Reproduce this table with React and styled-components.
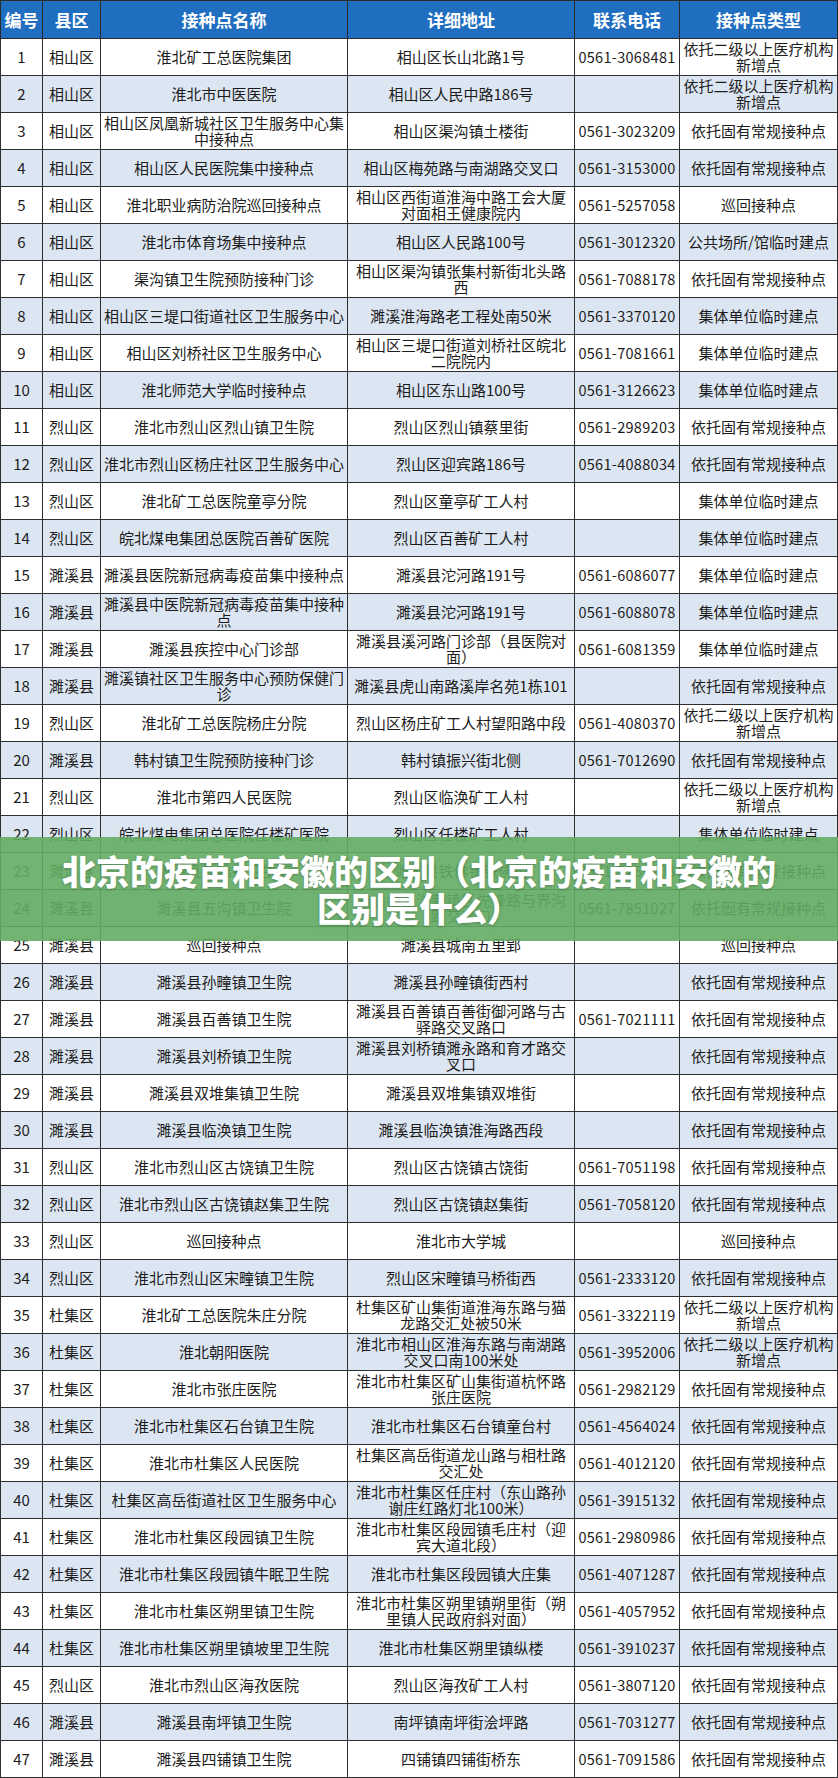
import styled, { createGlobalStyle } from "styled-components";

const GlobalStyle = createGlobalStyle`
  html, body {
    margin: 0;
    padding: 0;
    background: #ffffff;
  }
  body {
    font-family: "Noto Sans CJK SC", "Noto Sans", sans-serif;
  }
`;

const columns = [
  { title: "编号", width: 42 },
  { title: "县区", width: 58 },
  { title: "接种点名称", width: 247 },
  { title: "详细地址", width: 227 },
  { title: "联系电话", width: 105 },
  { title: "接种点类型", width: 158 },
];

const rows = [
  ["相山区", "淮北矿工总医院集团", "相山区长山北路1号", "0561-3068481", "依托二级以上医疗机构新增点"],
  ["相山区", "淮北市中医医院", "相山区人民中路186号", "", "依托二级以上医疗机构新增点"],
  ["相山区", "相山区凤凰新城社区卫生服务中心集中接种点", "相山区渠沟镇土楼街", "0561-3023209", "依托固有常规接种点"],
  ["相山区", "相山区人民医院集中接种点", "相山区梅苑路与南湖路交叉口", "0561-3153000", "依托固有常规接种点"],
  ["相山区", "淮北职业病防治院巡回接种点", "相山区西街道淮海中路工会大厦对面相王健康院内", "0561-5257058", "巡回接种点"],
  ["相山区", "淮北市体育场集中接种点", "相山区人民路100号", "0561-3012320", "公共场所/馆临时建点"],
  ["相山区", "渠沟镇卫生院预防接种门诊", "相山区渠沟镇张集村新街北头路西", "0561-7088178", "依托固有常规接种点"],
  ["相山区", "相山区三堤口街道社区卫生服务中心", "濉溪淮海路老工程处南50米", "0561-3370120", "集体单位临时建点"],
  ["相山区", "相山区刘桥社区卫生服务中心", "相山区三堤口街道刘桥社区皖北二院院内", "0561-7081661", "集体单位临时建点"],
  ["相山区", "淮北师范大学临时接种点", "相山区东山路100号", "0561-3126623", "集体单位临时建点"],
  ["烈山区", "淮北市烈山区烈山镇卫生院", "烈山区烈山镇蔡里街", "0561-2989203", "依托固有常规接种点"],
  ["烈山区", "淮北市烈山区杨庄社区卫生服务中心", "烈山区迎宾路186号", "0561-4088034", "依托固有常规接种点"],
  ["烈山区", "淮北矿工总医院童亭分院", "烈山区童亭矿工人村", "", "集体单位临时建点"],
  ["烈山区", "皖北煤电集团总医院百善矿医院", "烈山区百善矿工人村", "", "集体单位临时建点"],
  ["濉溪县", "濉溪县医院新冠病毒疫苗集中接种点", "濉溪县沱河路191号", "0561-6086077", "集体单位临时建点"],
  ["濉溪县", "濉溪县中医院新冠病毒疫苗集中接种点", "濉溪县沱河路191号", "0561-6088078", "集体单位临时建点"],
  ["濉溪县", "濉溪县疾控中心门诊部", "濉溪县溪河路门诊部（县医院对面）", "0561-6081359", "集体单位临时建点"],
  ["濉溪县", "濉溪镇社区卫生服务中心预防保健门诊", "濉溪县虎山南路溪岸名苑1栋101", "", "依托固有常规接种点"],
  ["烈山区", "淮北矿工总医院杨庄分院", "烈山区杨庄矿工人村望阳路中段", "0561-4080370", "依托二级以上医疗机构新增点"],
  ["濉溪县", "韩村镇卫生院预防接种门诊", "韩村镇振兴街北侧", "0561-7012690", "依托固有常规接种点"],
  ["烈山区", "淮北市第四人民医院", "烈山区临涣矿工人村", "", "依托二级以上医疗机构新增点"],
  ["烈山区", "皖北煤电集团总医院任楼矿医院", "烈山区任楼矿工人村", "", "集体单位临时建点"],
  ["濉溪县", "濉溪县铁佛镇卫生院", "濉溪县铁佛镇铁佛街", "0561-7251203", "依托固有常规接种点"],
  ["濉溪县", "濉溪县五沟镇卫生院", "濉溪县五沟新镇区先锋路与界沟路交叉口", "0561-7851027", "依托固有常规接种点"],
  ["濉溪县", "巡回接种点", "濉溪县城南五里郢", "", "巡回接种点"],
  ["濉溪县", "濉溪县孙疃镇卫生院", "濉溪县孙疃镇街西村", "", "依托固有常规接种点"],
  ["濉溪县", "濉溪县百善镇卫生院", "濉溪县百善镇百善街御河路与古驿路交叉路口", "0561-7021111", "依托固有常规接种点"],
  ["濉溪县", "濉溪县刘桥镇卫生院", "濉溪县刘桥镇濉永路和育才路交叉口", "", "依托固有常规接种点"],
  ["濉溪县", "濉溪县双堆集镇卫生院", "濉溪县双堆集镇双堆街", "", "依托固有常规接种点"],
  ["濉溪县", "濉溪县临涣镇卫生院", "濉溪县临涣镇淮海路西段", "", "依托固有常规接种点"],
  ["烈山区", "淮北市烈山区古饶镇卫生院", "烈山区古饶镇古饶街", "0561-7051198", "依托固有常规接种点"],
  ["烈山区", "淮北市烈山区古饶镇赵集卫生院", "烈山区古饶镇赵集街", "0561-7058120", "依托固有常规接种点"],
  ["烈山区", "巡回接种点", "淮北市大学城", "", "巡回接种点"],
  ["烈山区", "淮北市烈山区宋疃镇卫生院", "烈山区宋疃镇马桥街西", "0561-2333120", "依托固有常规接种点"],
  ["杜集区", "淮北矿工总医院朱庄分院", "杜集区矿山集街道淮海东路与猫龙路交汇处被50米", "0561-3322119", "依托二级以上医疗机构新增点"],
  ["杜集区", "淮北朝阳医院", "淮北市相山区淮海东路与南湖路交叉口南100米处", "0561-3952006", "依托二级以上医疗机构新增点"],
  ["杜集区", "淮北市张庄医院", "淮北市杜集区矿山集街道杭怀路张庄医院", "0561-2982129", "依托固有常规接种点"],
  ["杜集区", "淮北市杜集区石台镇卫生院", "淮北市杜集区石台镇童台村", "0561-4564024", "依托固有常规接种点"],
  ["杜集区", "淮北市杜集区人民医院", "杜集区高岳街道龙山路与相杜路交汇处", "0561-4012120", "依托固有常规接种点"],
  ["杜集区", "杜集区高岳街道社区卫生服务中心", "淮北市杜集区任庄村（东山路孙谢庄红路灯北100米）", "0561-3915132", "依托固有常规接种点"],
  ["杜集区", "淮北市杜集区段园镇卫生院", "淮北市杜集区段园镇毛庄村（迎宾大道北段）", "0561-2980986", "依托固有常规接种点"],
  ["杜集区", "淮北市杜集区段园镇牛眠卫生院", "淮北市杜集区段园镇大庄集", "0561-4071287", "依托固有常规接种点"],
  ["杜集区", "淮北市杜集区朔里镇卫生院", "淮北市杜集区朔里镇朔里街（朔里镇人民政府斜对面）", "0561-4057952", "依托固有常规接种点"],
  ["杜集区", "淮北市杜集区朔里镇坡里卫生院", "淮北市杜集区朔里镇纵楼", "0561-3910237", "依托固有常规接种点"],
  ["烈山区", "淮北市烈山区海孜医院", "烈山区海孜矿工人村", "0561-3807120", "依托固有常规接种点"],
  ["濉溪县", "濉溪县南坪镇卫生院", "南坪镇南坪街浍坪路", "0561-7031277", "依托固有常规接种点"],
  ["濉溪县", "濉溪县四铺镇卫生院", "四铺镇四铺街桥东", "0561-7091586", "依托固有常规接种点"],
];

const App = () => {
  return (
    <Page>
      <GlobalStyle />
      <Sheet>
        <colgroup>
          {columns.map((c) => (
            <col key={c.title} style={{ width: c.width }} />
          ))}
        </colgroup>
        <thead>
          <HeadRow>
            {columns.map((c) => (
              <HeadCell key={c.title}>{c.title}</HeadCell>
            ))}
          </HeadRow>
        </thead>
        <tbody>
          {rows.map((r, i) => (
            <Row key={i} striped={i % 2 === 1}>
              <Cell>{i + 1}</Cell>
              <Cell>{r[0]}</Cell>
              <Cell>{r[1]}</Cell>
              <Cell $wide>{r[2]}</Cell>
              <Phone>{r[3]}</Phone>
              <Cell>{r[4]}</Cell>
            </Row>
          ))}
        </tbody>
      </Sheet>
      <Banner>
        <BannerTitle>北京的疫苗和安徽的区别（北京的疫苗和安徽的区别是什么）</BannerTitle>
      </Banner>
    </Page>
  );
};

export default App;

const Page = styled.div`
  position: relative;
  width: 838px;
  height: 1778px;
  overflow: hidden;
  background: #ffffff;
`;

const Sheet = styled.table`
  width: 837px;
  table-layout: fixed;
  border-collapse: collapse;
  color: #1c1c1c;
`;

const HeadRow = styled.tr`
  height: 38px;
  background: #1f6ebf;
`;

const HeadCell = styled.th`
  border: 1px solid #2a2a2a;
  padding: 0;
  color: #ffffff;
  font-size: 17px;
  font-weight: 700;
  text-align: center;
  white-space: nowrap;
`;

const Row = styled.tr.withConfig({ shouldForwardProp: (p) => p !== "striped" })`
  height: 37px;
  background: ${({ striped }) => (striped ? "#dce6f2" : "#ffffff")};
`;

const Cell = styled.td`
  border: 1px solid #2f2f2f;
  padding: 0 ${({ $wide }) => ($wide ? "4px" : "1px")};
  font-size: 15px;
  line-height: 16px;
  text-align: center;
  vertical-align: middle;
  overflow: hidden;
`;

const Phone = styled(Cell)`
  font-size: 14.5px;
  letter-spacing: 0.3px;
  white-space: nowrap;
`;

const Banner = styled.div`
  position: absolute;
  left: 0;
  right: 0;
  top: 837px;
  height: 104px;
  display: flex;
  align-items: center;
  justify-content: center;
  padding: 0 50px;
  box-sizing: border-box;
  background: rgba(100, 172, 100, 0.9);
`;

const BannerTitle = styled.h1`
  margin: 0;
  color: #ffffff;
  font-size: 34px;
  line-height: 37px;
  font-weight: 900;
  text-align: center;
  text-shadow: 0 1px 3px rgba(0, 0, 0, 0.25);
`;
